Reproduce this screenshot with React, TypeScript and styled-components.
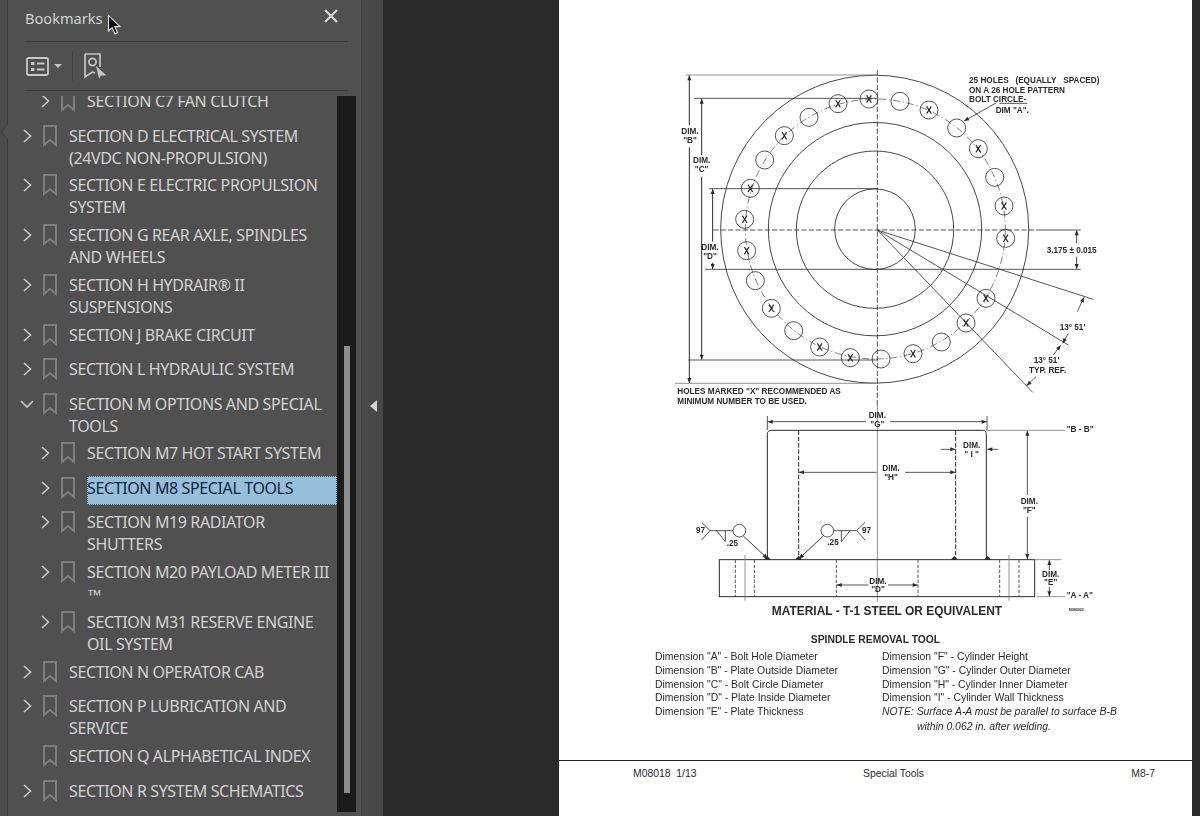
import React from "react";
import styled, { createGlobalStyle } from "styled-components";

const Global = createGlobalStyle`
  html, body { margin: 0; padding: 0; background: #2b2b2b; }
  #root { width: 1200px; height: 816px; overflow: hidden; }
`;

const Shell = styled.div`
  position: relative;
  display: flex;
  width: 1200px;
  height: 816px;
  overflow: hidden;
  font-family: "Noto Sans", "Open Sans", sans-serif;
`;
const Rail = styled.div`
  position: relative;
  flex: 0 0 7px;
  background: #4a4a4a;
  border-right: 1px solid #3c3c3c;
`;
const Notch = styled.svg`
  position: absolute;
  left: 0;
  top: 122px;
  width: 8px;
  height: 20px;
`;
const Panel = styled.aside`
  flex: 0 0 353px;
  display: flex;
  flex-direction: column;
  background: #505050;
  border-right: 1px solid #424242;
  min-height: 0;
`;
const PanelHeader = styled.header`
  flex: 0 0 42px;
  box-sizing: border-box;
  margin: 0 13px 0 17px;
  padding-bottom: 6px;
  display: flex;
  align-items: center;
  justify-content: space-between;
  border-bottom: 1px solid #3d3d3d;
  color: #d2d2d2;
  font-size: 14.6px;
`;
const CloseButton = styled.button`
  border: 0;
  background: none;
  padding: 0;
  margin: -3px 10px 0 0;
  width: 14px;
  height: 14px;
  color: #d6d6d6;
  display: flex;
`;
const Toolbar = styled.div`
  flex: 0 0 49px;
  box-sizing: border-box;
  margin: 0 13px 0 17px;
  display: flex;
  align-items: center;
  border-bottom: 1px solid #3d3d3d;
`;
const ToolSeparator = styled.span`
  width: 1px;
  height: 30px;
  background: #434343;
  margin: 0 11px 0 10px;
`;
const Caret = styled.span`
  width: 0;
  height: 0;
  margin-left: 5px;
  border-left: 4px solid transparent;
  border-right: 4px solid transparent;
  border-top: 4px solid #c6c6c6;
`;
const PanelBody = styled.div`
  flex: 1;
  min-height: 0;
  display: flex;
  padding: 5px 5px 4px 0;
`;
const TreeViewport = styled.div`
  flex: 1;
  min-width: 0;
  overflow: hidden;
`;
const Tree = styled.ul`
  list-style: none;
  margin: -6px 0 0;
  padding: 0;
`;
const Row = styled.li<{ $level: number; $lines: number }>`
  display: flex;
  align-items: flex-start;
  padding-left: ${(p) => 12 + p.$level * 18}px;
  height: ${(p) => (p.$lines === 2 ? 49.8 : 34.5)}px;
`;
const Toggle = styled.span`
  flex: 0 0 23px;
  height: 22px;
  display: flex;
  align-items: center;
  color: #c9c9c9;
`;
const MarkSlot = styled.span`
  flex: 0 0 26px;
  height: 22px;
  color: #7e7e7e;
  display: flex;
  align-items: center;
`;
const Label = styled.span<{ $selected?: boolean }>`
  flex: 1;
  min-width: 0;
  font-size: 16px;
  letter-spacing: -0.38px;
  line-height: 22px;
  color: ${(p) => (p.$selected ? "#10243c" : "#d3d3d3")};
  white-space: pre-line;
  ${(p) =>
    p.$selected &&
    `background:#96bfdc; outline:1px dotted #3c5a70; outline-offset:-1px; height:29px; margin-top:-1px; line-height:24px;`}
`;
const TradeMark = styled.span`
  font-family: "Liberation Sans", sans-serif;
  font-size: 15px;
`;
const ScrollTrack = styled.div`
  flex: 0 0 19px;
  background: #1a1a1a;
  display: flex;
  justify-content: center;
  align-items: flex-start;
`;
const ScrollThumb = styled.div`
  width: 6px;
  height: 447px;
  margin-top: 250px;
  background: #8e8e8e;
`;
const Splitter = styled.div`
  flex: 0 0 21px;
  background: #484848;
  display: flex;
  align-items: center;
  justify-content: center;
`;
const SplitArrow = styled.span`
  width: 0;
  height: 0;
  margin-top: -4px;
  margin-left: 1px;
  border-top: 6px solid transparent;
  border-bottom: 6px solid transparent;
  border-right: 7px solid #d0d0d0;
`;
const Viewer = styled.main`
  flex: 1;
  background: #2b2b2b;
  padding-left: 176px;
  padding-right: 8px;
  display: flex;
`;
const Sheet = styled.section`
  flex: 1;
  background: #fff;
  display: flex;
  flex-direction: column;
  font-family: "Liberation Sans", Arial, sans-serif;
  color: #2a2a2a;
  padding-top: 60px;
`;
const Drawing = styled.svg`
  display: block;
  width: 450px;
  height: 572px;
  margin-left: 101px;
  margin-bottom: 1px;
  flex: none;
  filter: blur(0.35px);
`;
const Caption = styled.div`
  margin-left: 96px;
  width: 441px;
  filter: blur(0.25px);
`;
const CaptionTitle = styled.div`
  text-align: center;
  font-size: 10.3px;
  font-weight: 700;
  line-height: 14px;
  margin-bottom: 3px;
`;
const CaptionGrid = styled.div`
  display: grid;
  grid-template-columns: 227px 1fr;
  font-size: 10.4px;
  line-height: 13.75px;
  white-space: nowrap;
`;
const Note = styled.div<{ $indent?: boolean }>`
  font-style: italic;
  padding-left: ${(p) => (p.$indent ? 35 : 0)}px;
  ${(p) => p.$indent && "margin-top: 1px;"}
`;
const Footer = styled.footer`
  margin-top: auto;
  border-top: 1px solid #222;
  display: grid;
  grid-template-columns: 230px 1fr auto;
  padding: 6px 37px 0 74px;
  font-size: 10.4px;
  line-height: 14px;
  height: 49px;
`;
const FooterItem = styled.span``;
const Cursor = styled.svg`
  position: absolute;
  left: 107px;
  top: 14px;
  width: 15px;
  height: 22px;
`;

const DimText = styled.text<{ $size?: number; $weight?: number }>`
  font-family: "Liberation Sans", Arial, sans-serif;
  font-size: ${(p) => p.$size ?? 24.6}px;
  font-weight: ${(p) => p.$weight ?? 700};
  fill: #2a2a2a;
`;

const rows: { level: number; text: string; lines: number; toggle?: "right" | "down" | "none"; selected?: boolean; tm?: boolean }[] = [
  { level: 1, text: "SECTION C7 FAN CLUTCH", lines: 1 },
  { level: 0, text: "SECTION D ELECTRICAL SYSTEM\n(24VDC NON-PROPULSION)", lines: 2 },
  { level: 0, text: "SECTION E ELECTRIC PROPULSION\nSYSTEM", lines: 2 },
  { level: 0, text: "SECTION G REAR AXLE, SPINDLES\nAND WHEELS", lines: 2 },
  { level: 0, text: "SECTION H HYDRAIR® II\nSUSPENSIONS", lines: 2 },
  { level: 0, text: "SECTION J BRAKE CIRCUIT", lines: 1 },
  { level: 0, text: "SECTION L HYDRAULIC SYSTEM", lines: 1 },
  { level: 0, text: "SECTION M OPTIONS AND SPECIAL\nTOOLS", lines: 2, toggle: "down" },
  { level: 1, text: "SECTION M7 HOT START SYSTEM", lines: 1 },
  { level: 1, text: "SECTION M8 SPECIAL TOOLS", lines: 1, selected: true },
  { level: 1, text: "SECTION M19 RADIATOR\nSHUTTERS", lines: 2 },
  { level: 1, text: "SECTION M20 PAYLOAD METER III\n", lines: 2, tm: true },
  { level: 1, text: "SECTION M31 RESERVE ENGINE\nOIL SYSTEM", lines: 2 },
  { level: 0, text: "SECTION N OPERATOR CAB", lines: 1 },
  { level: 0, text: "SECTION P LUBRICATION AND\nSERVICE", lines: 2 },
  { level: 0, text: "SECTION Q ALPHABETICAL INDEX", lines: 1, toggle: "none" },
  { level: 0, text: "SECTION R SYSTEM SCHEMATICS", lines: 1 },
];

const Chevron = ({ down }: { down?: boolean }) => (
  <svg width="14" height="14" viewBox="0 0 14 14" fill="none" stroke="currentColor" strokeWidth="1.6">
    {down ? <path d="M1 4 L7 10 L13 4" /> : <path d="M4 1 L10.5 7 L4 13" />}
  </svg>
);
const BookmarkMark = () => (
  <svg width="14" height="22" viewBox="0 0 14 22" fill="none" stroke="currentColor" strokeWidth="2">
    <path d="M1 1 H13 V20 L7 15 L1 20 Z" />
  </svg>
);

const holesX = [
  [627, 117], [534, 131], [373, 227], [271, 385], [254, 478], [260, 572], [334, 745], [479, 861],
  [571, 893], [759, 881], [918, 789], [978, 715], [1037, 535], [1032, 438], [955, 266], [807, 150],
];
const holes = [
  [720, 124], [447, 172], [314, 300], [286, 662], [401, 812], [663, 897], [844, 846], [1004, 352], [890, 204],
];

const Ink = "#2a2a2a";

function arrowHead(x1: number, y1: number, x2: number, y2: number, size = 15, w = 6) {
  const a = Math.atan2(y2 - y1, x2 - x1);
  const bx = x2 - size * Math.cos(a);
  const by = y2 - size * Math.sin(a);
  const nx = -Math.sin(a) * w;
  const ny = Math.cos(a) * w;
  return `${x2},${y2} ${bx + nx},${by + ny} ${bx - nx},${by - ny}`;
}
const Arrow = ({ x1, y1, x2, y2, sw = 2.4, size }: { x1: number; y1: number; x2: number; y2: number; sw?: number; size?: number }) => (
  <g>
    <line x1={x1} y1={y1} x2={x2} y2={y2} stroke={Ink} strokeWidth={sw} />
    <polygon points={arrowHead(x1, y1, x2, y2, size)} fill={Ink} />
  </g>
);
const L = ({ x1, y1, x2, y2, sw = 2.4, dash, c }: { x1: number; y1: number; x2: number; y2: number; sw?: number; dash?: string; c?: string }) => (
  <line x1={x1} y1={y1} x2={x2} y2={y2} stroke={c ?? Ink} strokeWidth={sw} strokeDasharray={dash} />
);
const Two = ({ x, y, a, b, gap = 27 }: { x: number; y: number; a: string; b: string; gap?: number }) => (
  <g textAnchor="middle">
    <DimText x={x} y={y}>{a}</DimText>
    <DimText x={x} y={y + gap}>{b}</DimText>
  </g>
);

const Y4 = 1020;

const PlanView = () => (
  <g>
    <g fill="none" stroke={Ink} strokeWidth="2.6">
      <circle cx="644" cy="507.5" r="462" />
      <circle cx="645" cy="507.5" r="320" />
      <circle cx="645" cy="509" r="236" />
      <circle cx="645" cy="507.5" r="121" />
      <circle cx="646" cy="507" r="390" strokeDasharray="22 8 4 8" strokeWidth="1.8" />
    </g>
    <L x1={652} y1={30} x2={652} y2={1040} dash="16 6" />
    <L x1={160} y1={510} x2={1130} y2={510} dash="16 6" />
    <L x1={1130} y1={510} x2={1262} y2={510} />
    <L x1={78} y1={45} x2={652} y2={45} c="#777" />
    <L x1={45} y1={970} x2={652} y2={970} c="#777" />
    <L x1={102} y1={115} x2={652} y2={115} />
    <L x1={85} y1={900} x2={650} y2={900} />
    <L x1={147} y1={386} x2={652} y2={386} />
    <L x1={135} y1={628} x2={1262} y2={628} />
    <Arrow x1={88} y1={195} x2={88} y2={46} sw={3} />
    <Arrow x1={88} y1={262} x2={88} y2={969} sw={3} />
    <Arrow x1={125} y1={285} x2={125} y2={116} sw={3} />
    <Arrow x1={125} y1={350} x2={125} y2={899} sw={3} />
    <Arrow x1={158} y1={545} x2={158} y2={387} sw={3} />
    <Arrow x1={158} y1={608} x2={158} y2={627} sw={3} />
    <Arrow x1={1250} y1={550} x2={1250} y2={511} sw={2.6} />
    <Arrow x1={1250} y1={590} x2={1250} y2={627} sw={2.6} />
    <L x1={652} y1={510} x2={1300} y2={718} />
    <L x1={652} y1={510} x2={1225} y2={855} />
    <L x1={652} y1={510} x2={1118} y2={997} />
    <Arrow x1={1252} y1={755} x2={1272} y2={712} />
    <Arrow x1={1225} y1={820} x2={1208} y2={850} />
    <Arrow x1={1180} y1={885} x2={1202} y2={856} />
    <Arrow x1={1128} y1={950} x2={1100} y2={977} />
    <Arrow x1={1010} y1={128} x2={912} y2={183} />
    {holes.map(([x, y]) => (
      <circle key={`${x}-${y}`} cx={x} cy={y} r="27" fill="none" stroke={Ink} strokeWidth="2.4" />
    ))}
    {holesX.map(([x, y]) => (
      <g key={`${x}-${y}`}>
        <circle cx={x} cy={y} r="27" fill="none" stroke={Ink} strokeWidth="2.4" />
        <path d={`M${x - 7} ${y - 11} L${x + 7} ${y + 11} M${x + 7} ${y - 11} L${x - 7} ${y + 11}`} stroke={Ink} strokeWidth="3.6" />
      </g>
    ))}
    <DimText x="927" y="70" xmlSpace="preserve">25 HOLES   (EQUALLY   SPACED)</DimText>
    <DimText x="927" y="98">ON A 26 HOLE PATTERN</DimText>
    <DimText x="927" y="126">BOLT CIRCLE-</DimText>
    <L x1={1018} y1={130} x2={1102} y2={130} />
    <DimText x="1007" y="160">DIM "A".</DimText>
    <Two x={90} y={221} a="DIM." b={'"B"'} />
    <Two x={125} y={310} a="DIM." b={'"C"'} />
    <Two x={150} y={570} a="DIM." b={'"D"'} />
    <DimText x="1160" y="578">3.175 ± 0.015</DimText>
    <DimText x="1199" y="810">13° 51'</DimText>
    <DimText x="1121" y="908">13° 51'</DimText>
    <DimText x="1107" y="940">TYP. REF.</DimText>
    <DimText x="52" y="1003">HOLES MARKED "X" RECOMMENDED AS</DimText>
    <DimText x="52" y="1031">MINIMUM NUMBER TO BE USED.</DimText>
  </g>
);

const fillets = [322, 416, 883, 983];

const Weld = ({ flip }: { flip?: boolean }) => (
  <g transform={flip ? `translate(740 0) scale(-1 1)` : undefined}>
    <circle cx={238} cy={392} r={19} fill="none" stroke={Ink} strokeWidth="2.4" />
    <L x1={150} y1={392} x2={219} y2={392} />
    <path d="M125 367 L150 392 L125 420" fill="none" stroke={Ink} strokeWidth="2.4" />
    <path d="M170 392 L196 425 V392" fill="none" stroke={Ink} strokeWidth="2.4" />
    <Arrow x1={250} y1={408} x2={325} y2={478} sw={2.8} size={18} />
  </g>
);

const SideView = () => (
  <g transform={`translate(0 ${Y4})`}>
    <L x1={652} y1={0} x2={652} y2={605} c="#777" />
    <L x1={322} y1={48} x2={322} y2={90} />
    <L x1={981} y1={48} x2={981} y2={90} />
    <Arrow x1={618} y1={65} x2={323} y2={65} />
    <Arrow x1={690} y1={65} x2={980} y2={65} />
    <Two x={652} y={55} a="DIM." b={'"G"'} />
    <path d="M322 478 V103 Q322 91 335 91 H968 Q979 91 979 103 V478" fill="none" stroke={Ink} strokeWidth="3" />
    <L x1={416} y1={91} x2={416} y2={478} sw={3} dash="14 5" />
    <L x1={887} y1={91} x2={887} y2={478} sw={3} dash="14 5" />
    <L x1={979} y1={91} x2={1215} y2={91} c="#777" />
    <DimText x="1220" y="97">"B - B"</DimText>
    <Arrow x1={1102} y1={285} x2={1102} y2={92} />
    <Arrow x1={1102} y1={350} x2={1102} y2={477} />
    <Two x={1108} y={313} a="DIM." b={'"F"'} />
    <Arrow x1={842} y1={148} x2={886} y2={148} />
    <Arrow x1={1015} y1={148} x2={982} y2={148} />
    <Two x={935} y={145} a="DIM." b={'" I "'} />
    <Arrow x1={650} y1={217} x2={417} y2={217} />
    <Arrow x1={735} y1={217} x2={886} y2={217} />
    <Two x={693} y={212} a="DIM." b={'"H"'} />
    <rect x={178} y={479} width={946} height={111} fill="none" stroke={Ink} strokeWidth="3" />
    {[226, 283, 1019, 1077, 529, 774].map((x) => (
      <L key={x} x1={x} y1={479} x2={x} y2={590} dash="10 5" />
    ))}
    <L x1={255} y1={465} x2={255} y2={602} c="#777" />
    <L x1={1047} y1={465} x2={1047} y2={602} c="#777" />
    <Arrow x1={625} y1={555} x2={530} y2={555} />
    <Arrow x1={684} y1={555} x2={773} y2={555} />
    <Two x={654} y={551} a="DIM." b={'"D"'} gap={25} />
    <L x1={1124} y1={479} x2={1205} y2={479} c="#777" />
    <L x1={1130} y1={590} x2={1215} y2={590} c="#777" />
    <Arrow x1={1168} y1={510} x2={1168} y2={480} />
    <Arrow x1={1168} y1={560} x2={1168} y2={589} />
    <Two x={1172} y={530} a="DIM." b={'"E"'} gap={26} />
    <DimText x="1220" y="595">"A - A"</DimText>
    <Weld />
    <Weld flip />
    <DimText x="108" y="400">97</DimText>
    <DimText x="606" y="400">97</DimText>
    <DimText x="200" y="438">.25</DimText>
    <DimText x="502" y="436">.25</DimText>
    {fillets.map((x) => (
      <polygon key={x} points={`${x - 11},479 ${x + 11},479 ${x},468`} fill={Ink} />
    ))}
    <DimText x="681" y="646" $size={35.8} textAnchor="middle">MATERIAL - T-1 STEEL OR EQUIVALENT</DimText>
    <DimText x="1226" y="634" $size={11}>M080022</DimText>
  </g>
);

export default function App() {
  return (
    <Shell>
      <Global />
      <Rail>
        <Notch viewBox="0 0 8 20">
          <path d="M8 1 L1 10 L8 18" fill="#505050" stroke="#3c3c3c" strokeWidth="1" />
        </Notch>
      </Rail>
      <Panel>
        <PanelHeader>
          <span>Bookmarks</span>
          <CloseButton aria-label="Close">
            <svg width="14" height="14" viewBox="0 0 14 14" stroke="currentColor" strokeWidth="2.2" fill="none">
              <path d="M1 1 L13 13 M13 1 L1 13" />
            </svg>
          </CloseButton>
        </PanelHeader>
        <Toolbar>
          <svg width="23" height="19" viewBox="0 0 23 19" fill="none" stroke="#c8c8c8" strokeWidth="1.8" style={{ marginLeft: 1 }}>
            <rect x="1" y="1" width="21" height="17" rx="1.5" />
            <rect x="5" y="5" width="3.4" height="3" fill="#c8c8c8" stroke="none" />
            <rect x="5" y="11" width="3.4" height="3" fill="#c8c8c8" stroke="none" />
            <path d="M11 6.5 H18.5 M11 12.5 H18.5" />
          </svg>
          <Caret />
          <ToolSeparator />
          <svg width="23" height="26" viewBox="0 0 23 26" fill="none" stroke="#c4c4c4" strokeWidth="1.7">
            <path d="M1 1 H16 V14 M1 1 V24 L8.5 19 L11 20" />
            <circle cx="8.5" cy="9" r="3.6" />
            <path d="M12 13 L22.5 22.5 L17 22.5 L15 25.5 Z" fill="#c4c4c4" stroke="none" />
          </svg>
        </Toolbar>
        <PanelBody>
          <TreeViewport>
            <Tree>
              {rows.map((r) => {
                const kind = r.toggle ?? "right";
                return (
                  <Row key={r.text} $level={r.level} $lines={r.lines}>
                    <Toggle>{kind !== "none" && <Chevron down={kind === "down"} />}</Toggle>
                    <MarkSlot><BookmarkMark /></MarkSlot>
                    <Label $selected={r.selected}>
                      {r.text}
                      {r.tm && <TradeMark>™</TradeMark>}
                    </Label>
                  </Row>
                );
              })}
            </Tree>
          </TreeViewport>
          <ScrollTrack><ScrollThumb /></ScrollTrack>
        </PanelBody>
      </Panel>
      <Splitter><SplitArrow /></Splitter>
      <Viewer>
        <Sheet>
          <Drawing viewBox="0 0 1350 1716">
            <PlanView />
            <SideView />
          </Drawing>
          <Caption>
            <CaptionTitle>SPINDLE REMOVAL TOOL</CaptionTitle>
            <CaptionGrid>
              <div>
                <div>Dimension "A" - Bolt Hole Diameter</div>
                <div>Dimension "B" - Plate Outside Diameter</div>
                <div>Dimension "C" - Bolt Circle Diameter</div>
                <div>Dimension "D" - Plate Inside Diameter</div>
                <div>Dimension "E" - Plate Thickness</div>
              </div>
              <div>
                <div>Dimension "F" - Cylinder Height</div>
                <div>Dimension "G" - Cylinder Outer Diameter</div>
                <div>Dimension "H" - Cylinder Inner Diameter</div>
                <div>Dimension "I" - Cylinder Wall Thickness</div>
                <Note>NOTE: Surface A-A must be parallel to surface B-B</Note>
                <Note $indent>within 0.062 in. after welding.</Note>
              </div>
            </CaptionGrid>
          </Caption>
          <Footer>
            <FooterItem>M08018&nbsp;&nbsp;1/13</FooterItem>
            <FooterItem>Special Tools</FooterItem>
            <FooterItem>M8-7</FooterItem>
          </Footer>
        </Sheet>
      </Viewer>
      <Cursor viewBox="0 0 15 22">
        <path d="M1.5 1.5 V17 L5.2 13.6 L8 20 L10.6 18.8 L7.8 12.6 L12.8 12.4 Z" fill="#0c0c0c" stroke="#e8e8e8" strokeWidth="1.1" />
      </Cursor>
    </Shell>
  );
}
